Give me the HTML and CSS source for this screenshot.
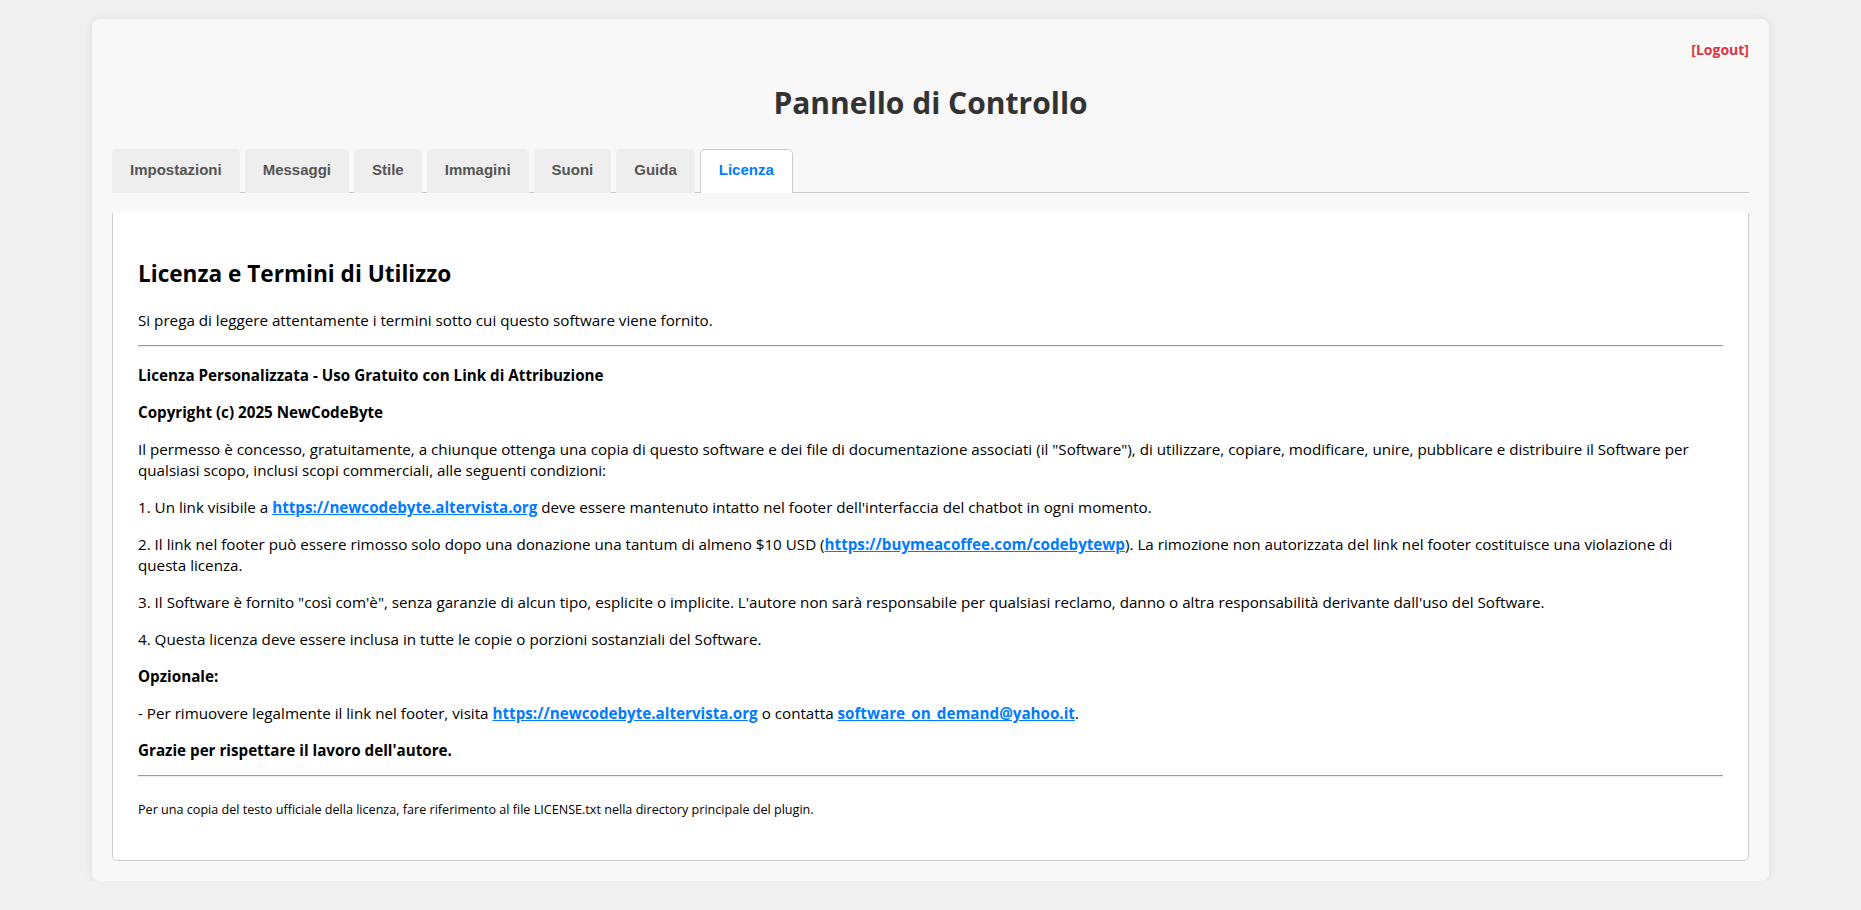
FILE: index.html
```html
<!DOCTYPE html>
<html lang="it">
<head>
<meta charset="utf-8">
<title>Pannello di Controllo</title>
<link rel="stylesheet" href="styles.css">
</head>
<body>
<div class="wrap">
  <div class="logout-row"><a class="logout" href="#">[Logout]</a></div>
  <h1 class="title">Pannello di Controllo</h1>
  <nav class="tabs">
    <a class="tab" href="#">Impostazioni</a>
    <a class="tab" href="#">Messaggi</a>
    <a class="tab" href="#">Stile</a>
    <a class="tab" href="#">Immagini</a>
    <a class="tab" href="#">Suoni</a>
    <a class="tab" href="#">Guida</a>
    <a class="tab active" href="#">Licenza</a>
  </nav>
  <section class="panel">
    <h2 class="panel-title">Licenza e Termini di Utilizzo</h2>
    <p>Si prega di leggere attentamente i termini sotto cui questo software viene fornito.</p>
    <hr class="rule">
    <p><strong>Licenza Personalizzata - Uso Gratuito con Link di Attribuzione</strong></p>
    <p><strong>Copyright (c) 2025 NewCodeByte</strong></p>
    <p>Il permesso è concesso, gratuitamente, a chiunque ottenga una copia di questo software e dei file di documentazione associati (il "Software"), di utilizzare, copiare, modificare, unire, pubblicare e distribuire il Software per qualsiasi scopo, inclusi scopi commerciali, alle seguenti condizioni:</p>
    <p>1. Un link visibile a <a class="link" href="#">https://newcodebyte.altervista.org</a> deve essere mantenuto intatto nel footer dell'interfaccia del chatbot in ogni momento.</p>
    <p>2. Il link nel footer può essere rimosso solo dopo una donazione una tantum di almeno $10 USD (<a class="link" href="#">https://buymeacoffee.com/codebytewp</a>). La rimozione non autorizzata del link nel footer costituisce una violazione di questa licenza.</p>
    <p>3. Il Software è fornito "così com'è", senza garanzie di alcun tipo, esplicite o implicite. L'autore non sarà responsabile per qualsiasi reclamo, danno o altra responsabilità derivante dall'uso del Software.</p>
    <p>4. Questa licenza deve essere inclusa in tutte le copie o porzioni sostanziali del Software.</p>
    <p><strong>Opzionale:</strong></p>
    <p>- Per rimuovere legalmente il link nel footer, visita <a class="link" href="#">https://newcodebyte.altervista.org</a> o contatta <a class="link" href="#">software_on_demand@yahoo.it</a>.</p>
    <p><strong>Grazie per rispettare il lavoro dell'autore.</strong></p>
    <hr class="rule">
    <p class="note">Per una copia del testo ufficiale della licenza, fare riferimento al file LICENSE.txt nella directory principale del plugin.</p>
  </section>
</div>
</body>
</html>
```

FILE: styles.css
```css
* { box-sizing: border-box; }

html, body {
  margin: 0;
  padding: 0;
}

body {
  background: #f0f0f0;
  font-family: "Open Sans", "Noto Sans", sans-serif;
  color: #000;
}

.wrap {
  width: 1677px;
  margin: 19px auto 0;
  padding: 20px;
  background: #f8f8f8;
  border-radius: 8px;
  box-shadow: 0 0 10px rgba(0, 0, 0, 0.08);
}

.logout-row {
  text-align: right;
  line-height: 20px;
}

.logout {
  color: #dc3545;
  font-weight: 700;
  font-size: 14px;
  text-decoration: none;
}

.title {
  margin: 22px 0 25px;
  text-align: center;
  font-size: 30px;
  line-height: 42px;
  font-weight: 700;
  color: #333;
}

.tabs {
  display: flex;
  gap: 5px;
  border-bottom: 1px solid #ccc;
}

.tab {
  font-family: "Liberation Sans", Arial, sans-serif;
  font-size: 15px;
  font-weight: 700;
  line-height: 18px;
  color: #555;
  text-decoration: none;
  background: #eee;
  padding: 11px 17px 13px;
  border: 1px solid transparent;
  border-bottom: none;
  border-radius: 5px 5px 0 0;
  margin-bottom: -1px;
}

.tab.active {
  background: #fff;
  color: #007bff;
  border-color: #ccc;
  padding-left: 18px;
  padding-right: 18px;
  padding-bottom: 14px;
}

.panel {
  margin-top: 20px;
  background: #fff;
  border: 1px solid #ccc;
  border-top: none;
  border-radius: 0 0 5px 5px;
  padding: 25px;
  font-size: 15.2px;
  line-height: 21px;
}

.panel-title {
  margin: 22px 0 22px;
  font-size: 22.6px;
  line-height: 28px;
  font-weight: 700;
}

.panel p {
  margin: 16px 0;
}

.panel p strong {
  font-weight: 700;
}

.rule {
  margin: -2px 0 18px;
  border: 0;
  border-top: 1px solid #9a9a9a;
  border-bottom: 1px solid #eee;
  height: 0;
}

.link {
  color: #007bff;
  font-weight: 700;
  text-decoration: underline;
}

.panel p.note {
  font-size: 12.6px;
  line-height: 17px;
  margin: 24px 0 17px;
}
```
